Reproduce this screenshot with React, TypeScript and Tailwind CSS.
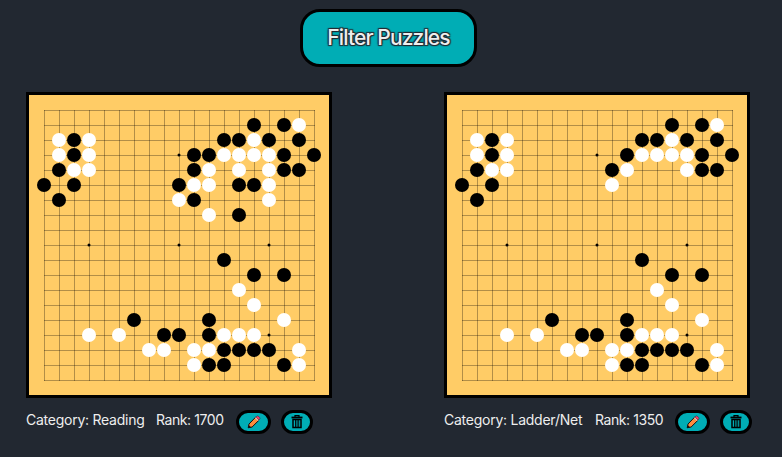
const WHITE = 'O';
const BLACK = 'X';

const reading: string[] = [
  '...................',
  '..............X.XO.',
  '.OXO........XXOX.X.',
  '.OXO......XXOOOOX.X',
  '.XOO......XO.O.OXX.',
  'X.X......XOO.XXO...',
  '.X.......OX....O...',
  '...........O.X.....',
  '...................',
  '...................',
  '............X......',
  '..............X.X..',
  '.............O.....',
  '..............O....',
  '......X....X....O..',
  '...O.O..XX.XOOO....',
  '.......OO.OOXXXX.O.',
  '..........OXX...XO.',
  '...................',
];

const ladder: string[] = [
  ...reading.slice(0, 3),
  '.OXO.......XOOOOX.X',
  '.XOO......XO...OXX.',
  'X.X.......O........',
  '.X.................',
  '...................',
  ...reading.slice(8),
];

const LINES = Array.from({ length: 19 }, (_, i) => 15 + i * 15);
const STARS = [60, 150, 240];

function Board({ rows }: { rows: string[] }) {
  return (
    <div className="h-[306px] w-[306px] border-[3px] border-black bg-[#ffcc66]">
      <svg width="300" height="300" viewBox="0 0 300 300" className="block">
        <path
          d={LINES.map((p) => `M${p + 0.5} 15V286M15 ${p + 0.5}H286`).join('')}
          stroke="#000"
          strokeOpacity="0.3"
          strokeWidth="1"
        />
        {STARS.map((y) => STARS.map((x) => <circle key={`${x}-${y}`} cx={x} cy={y} r="1.5" />))}
        {rows.map((row, y) =>
          row.split('').map((c, x) =>
            c === WHITE || c === BLACK ? (
              <circle key={`${x}-${y}`} cx={15 + x * 15} cy={15 + y * 15} r="7" fill={c === WHITE ? '#fff' : '#000'} />
            ) : null,
          ),
        )}
      </svg>
    </div>
  );
}

function Pencil() {
  return (
    <svg width="14" height="14" viewBox="0 0 14 14">
      <path d="M1.2 12.8 2 9 8.8 2 12 5.2 5.1 12Z" fill="#ff8b3d" stroke="#111" strokeWidth="1" strokeLinejoin="round" />
      <path d="m8.8 2.2 1-1q.8-.6 1.5 0l1.4 1.4q.6.8 0 1.5l-.9 1Z" fill="#f8396b" stroke="#111" strokeWidth=".4" />
      <path d="m8 3 3 3 .7-.8L8.8 2.3Z" fill="#dcc7c6" />
      <path d="m1 13 .8-3 2.2 2.2Z" fill="#111" />
    </svg>
  );
}

function Trash() {
  return (
    <svg width="12" height="14" viewBox="0 0 12 14" fill="none" stroke="#000">
      <path d="M4 2V.7h4V2" strokeWidth="1.2" />
      <path d="M.5 2.5h11" strokeWidth="1.8" />
      <path d="M2 4.5h8v8H2Z" strokeWidth="1.5" />
      <path d="M4.5 5v7M6.1 5v7M7.7 5v7" strokeWidth=".9" />
    </svg>
  );
}

function Puzzle({ rows, category, rank, categoryClass }: { rows: string[]; category: string; rank: number; categoryClass: string }) {
  return (
    <section className="w-[312px]">
      <Board rows={rows} />
      <div className="mt-3 flex h-6 items-center">
        <span className={`${categoryClass} -mt-1 shrink-0 whitespace-nowrap`}>Category: {category}</span>
        <span className="-mt-1 w-20 shrink-0 whitespace-nowrap tracking-[-0.42px]">Rank: {rank}</span>
        <button className="flex h-6 w-[35px] shrink-0 items-center justify-center rounded-full border-[3px] border-black bg-[#00adb5]">
          <Pencil />
        </button>
        <button className="ml-[10px] flex h-6 w-8 shrink-0 items-center justify-center rounded-full border-[3px] border-black bg-[#00adb5]">
          <Trash />
        </button>
      </div>
    </section>
  );
}

export default function App() {
  return (
    <main className="h-[457px] w-[782px] overflow-hidden bg-[#222831] pt-[9px] font-[Inter,sans-serif] text-sm text-[#eeeeee]">
      <button className="ml-[300px] flex h-[58px] w-[177px] items-center justify-center rounded-[20px] border-[3px] border-black bg-[#00adb5] text-[21px] font-medium tracking-[-0.88px] whitespace-nowrap [text-shadow:1px_1px_1px_#222831,-1px_-1px_1px_#222831,1px_-1px_1px_#222831,-1px_1px_1px_#222831]">
        Filter Puzzles
      </button>
      <div className="mt-[25px] ml-[26px] flex gap-[106px]">
        <Puzzle rows={reading} category="Reading" rank={1700} categoryClass="w-[130px] tracking-[-0.25px]" />
        <Puzzle rows={ladder} category="Ladder/Net" rank={1350} categoryClass="w-[151px] tracking-[-0.25px]" />
      </div>
    </main>
  );
}
